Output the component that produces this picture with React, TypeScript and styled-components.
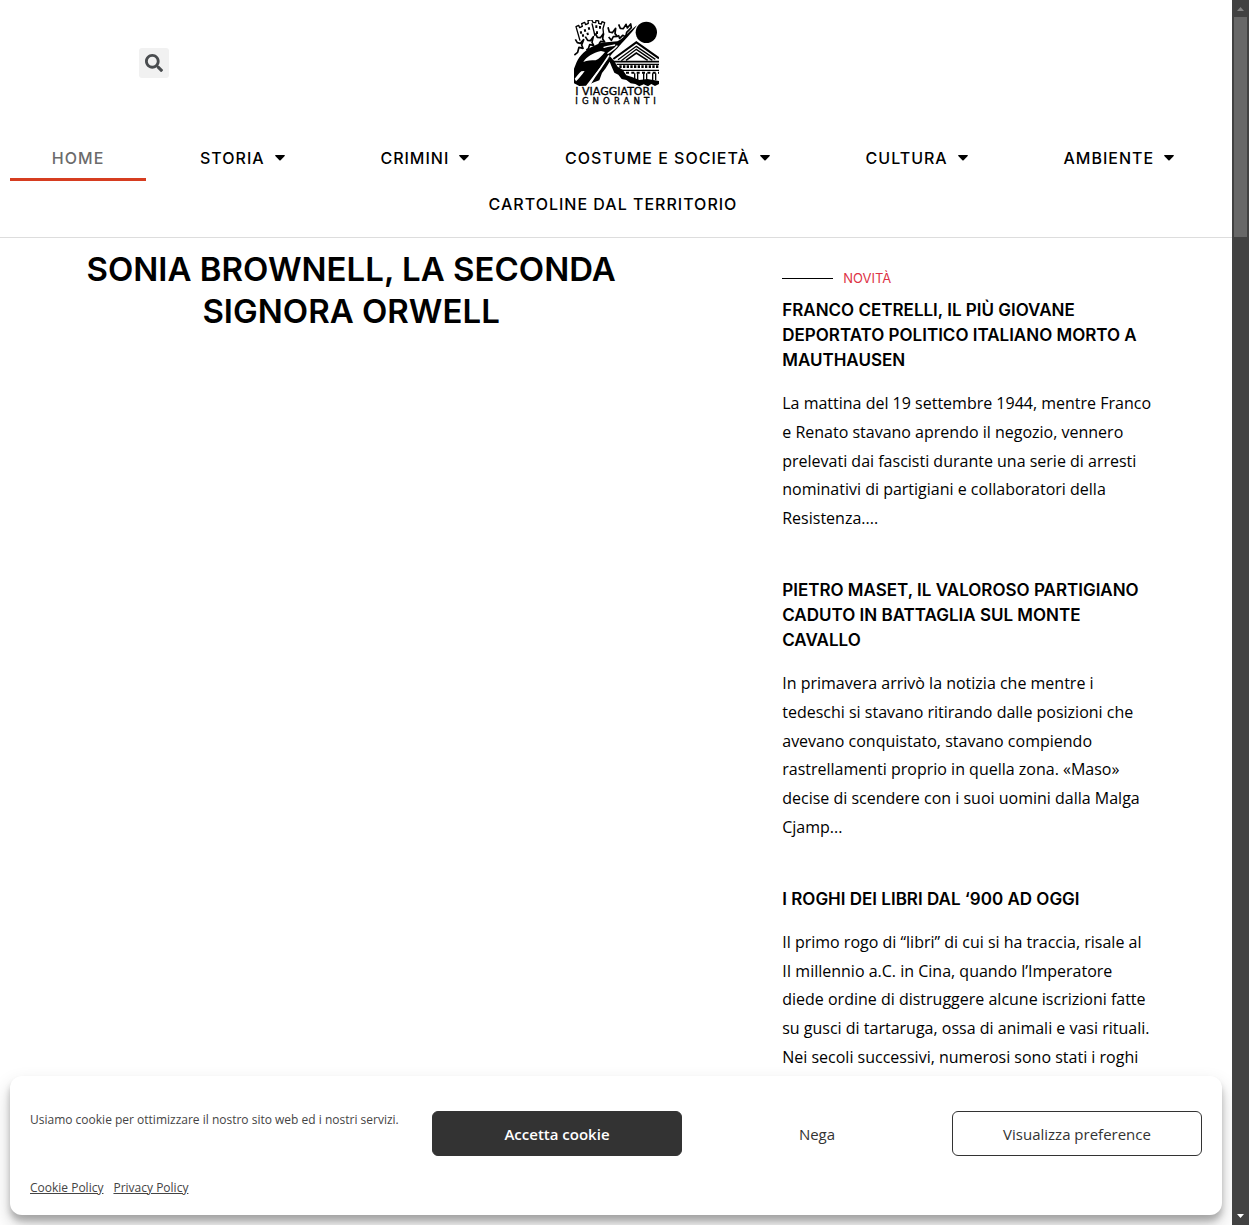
import React from "react";
import styled, { createGlobalStyle } from "styled-components";

const headingFont = `Inter, "Liberation Sans", sans-serif`;
const bodyFont = `"Open Sans", "Noto Sans", sans-serif`;

const GlobalStyle = createGlobalStyle`
  *, *::before, *::after { box-sizing: border-box; }
  body { margin: 0; background: #fff; color: #000; font-family: ${bodyFont}; }
  h1, h2, p, ul { margin: 0; padding: 0; }
`;

const Window = styled.div`
  display: grid;
  grid-template-columns: minmax(0, 1fr) 17px;
  height: 100vh;
  overflow: hidden;
`;

const Viewport = styled.div`
  position: relative;
  overflow: hidden;
`;

const Header = styled.header`
  border-bottom: 1px solid #ddd;
  padding-bottom: 10px;
`;

const Branding = styled.div`
  display: grid;
  grid-template-columns: 1fr 2fr 1fr;
  align-items: center;
  justify-items: center;
  padding: 20px 0;
`;

const SearchButton = styled.button`
  display: flex;
  align-items: center;
  justify-content: center;
  width: 30px;
  height: 30px;
  padding: 0;
  border: 0;
  border-radius: 3px;
  background: #f1f1f1;
  color: #494c4f;
  cursor: pointer;
`;

const LogoLink = styled.a`
  display: block;
  color: #000;
  svg { display: block; }
`;

const Menu = styled.ul`
  display: flex;
  flex-wrap: wrap;
  column-gap: 12px;
  padding: 10px 16px 0 10px;
  list-style: none;
`;

const MenuItem = styled.li`
  flex: 1 1 auto;
`;

const MenuLink = styled.a<{ $active?: boolean }>`
  display: flex;
  align-items: center;
  justify-content: center;
  gap: 10px;
  height: 46px;
  padding: 0 20px;
  border-bottom: 3px solid ${(p) => (p.$active ? "#d63d20" : "transparent")};
  border-top: 3px solid transparent;
  color: ${(p) => (p.$active ? "#6b6b6b" : "#000")};
  font: 500 16px/20px ${headingFont};
  letter-spacing: 1px;
  text-transform: uppercase;
  text-decoration: none;
  white-space: nowrap;
`;

const Columns = styled.main`
  display: grid;
  grid-template-columns: 57fr 43fr;
`;

const Feature = styled.article`
  padding: 10px 80px;
`;

const FeatureTitle = styled.h1`
  font: 600 33px/42px ${headingFont};
  text-align: center;
  text-transform: uppercase;
`;

const News = styled.section`
  padding: 30px 80px 0;
`;

const Eyebrow = styled.p`
  display: flex;
  align-items: center;
  gap: 10px;
  margin-bottom: 10px;
  color: #dd3345;
  font: 400 13px/20px ${headingFont};
  text-transform: uppercase;
  &::before {
    content: "";
    width: 51px;
    border-top: 1px solid #000;
  }
`;

const Story = styled.article`
  margin-bottom: 45px;
`;

const StoryTitle = styled.h2`
  margin-bottom: 16px;
  font: 600 17px/25px ${headingFont};
  text-transform: uppercase;
`;

const PlainLink = styled.a`
  color: inherit;
  text-decoration: none;
`;

const Excerpt = styled.p`
  font-size: 16px;
  font-weight: 400;
  line-height: 1.8;
`;

const Banner = styled.section`
  position: absolute;
  right: 10px;
  bottom: 10px;
  left: 10px;
  display: grid;
  grid-template-columns: minmax(0, 1fr) repeat(3, 250px);
  column-gap: 10px;
  row-gap: 22px;
  padding: 35px 20px 17px;
  border-radius: 12px;
  background: #fff;
  color: #444;
  box-shadow: rgba(0, 0, 0, 0.19) 0 10px 20px, rgba(0, 0, 0, 0.23) 0 6px 6px;
`;

const Message = styled.p`
  font: 400 12px/18px ${bodyFont};
`;

const variants = {
  accept: "background: #333; border-color: #333; color: #fff; font-weight: 600;",
  deny: "background: #fff; border-color: #fff; color: #333;",
  preferences: "background: #fff; border-color: #333; color: #333;",
};

const ConsentButton = styled.button<{ $kind: keyof typeof variants }>`
  height: 45px;
  border: 1px solid;
  border-radius: 6px;
  font: 400 15px/20px ${bodyFont};
  cursor: pointer;
  ${(p) => variants[p.$kind]}
`;

const Policies = styled.nav`
  display: flex;
  grid-column: 1 / -1;
  gap: 10px;
`;

const PolicyLink = styled.a`
  color: #444;
  font: 400 12px/20px ${bodyFont};
`;

const ScrollTrack = styled.div`
  display: flex;
  flex-direction: column;
  align-items: center;
  background: #424242;
`;

const ScrollThumb = styled.div`
  width: 13px;
  height: 220px;
  margin-bottom: auto;
  background: #686868;
`;

const ScrollArrow = styled.svg`
  display: block;
  width: 17px;
  height: 17px;
`;

const menu = [
  { label: "Home", active: true },
  { label: "Storia", sub: true },
  { label: "Crimini", sub: true },
  { label: "Costume e società", sub: true },
  { label: "Cultura", sub: true },
  { label: "Ambiente", sub: true },
  { label: "Cartoline dal territorio" },
];

const stories = [
  {
    title: "Franco Cetrelli, il più giovane deportato politico italiano morto a Mauthausen",
    text: "La mattina del 19 settembre 1944, mentre Franco e Renato stavano aprendo il negozio, vennero prelevati dai fascisti durante una serie di arresti nominativi di partigiani e collaboratori della Resistenza....",
  },
  {
    title: "Pietro Maset, il valoroso partigiano caduto in battaglia sul Monte Cavallo",
    text: "In primavera arrivò la notizia che mentre i tedeschi si stavano ritirando dalle posizioni che avevano conquistato, stavano compiendo rastrellamenti proprio in quella zona. «Maso» decise di scendere con i suoi uomini dalla Malga Cjamp...",
  },
  {
    title: "I roghi dei libri dal ‘900 ad oggi",
    text: "Il primo rogo di “libri” di cui si ha traccia, risale al II millennio a.C. in Cina, quando l’Imperatore diede ordine di distruggere alcune iscrizioni fatte su gusci di tartaruga, ossa di animali e vasi rituali. Nei secoli successivi, numerosi sono stati i roghi",
  },
];

const SearchIcon = () => (
  <svg width="18" height="18" viewBox="0 0 512 512" fill="currentColor" aria-hidden="true">
    <path d="M505 442.700 405.300 343c-4.500-4.500-10.600-7-17-7H372c27.600-35.300 44-79.700 44-128C416 93.100 322.900 0 208 0S0 93.100 0 208s93.100 208 208 208c48.300 0 92.700-16.400 128-44v16.300c0 6.400 2.500 12.500 7 17l99.700 99.700c9.400 9.400 24.600 9.400 33.900 0l28.300-28.300c9.400-9.400 9.400-24.600.1-34zM208 336c-70.700 0-128-57.200-128-128 0-70.700 57.200-128 128-128 70.700 0 128 57.200 128 128 0 70.700-57.200 128-128 128z" />
  </svg>
);

const Caret = () => (
  <svg width="10" height="6" viewBox="0 0 10 6" fill="currentColor" aria-hidden="true">
    <path d="M.7 0h8.600q.9.300.4 1L5.600 5.200q-.6.500-1.200 0L.3 1Q-.2.300.7 0z" />
  </svg>
);

const Logo = () => (
  <svg width="85" height="85" viewBox="42 30 255 255" role="img" aria-label="I Viaggiatori Ignoranti">
    <circle cx="259" cy="67" r="32" />

    {/* castle */}
    <g fill="none" stroke="#000" strokeWidth="4" strokeLinejoin="round">
      <path d="M60 92 48 50l8-4 3 7 8-4-2-8 9-4 3 7 8-4-1-8 11-3 4 8 8 1 1-7 8 2v7l8 2 2-7 8 3-5 18 2 20" />
      <path d="m96 40 9 38" />
      <path strokeWidth="6" d="m62 64 2 7m10-13 2 7m10-13 2 7m-20 14 2 7m12-12 2 7m25-29v8m11-6v8m-9 8v8" />
    </g>

    {/* crowd along the road */}
    <g fill="none" stroke="#000" strokeWidth="5" strokeLinejoin="round">
      <path d="m46 88 6 10 9 2 10-11-6 16 4 10-12-3-4 15-10 8" />
      <path d="m76 80 7 11 8 1 9-12-4 17 5 9-12-2-4 12-6 4" />
      <path d="m106 70 6 12 9 1 9-12-2 16 6 9-12-2-5 8" />
      <path d="m144 52 4 14 9 2 10-13-2 16 7 8-12 1-6 11-8-10" />
      <path d="m176 43 5 12 9 1 8-13 4 11 10-12 2 11-14 14-3 13-9-4-9 9-4-10" />
    </g>

    {/* winding road */}
    <path d="M231 46C208 62 196 82 172 94c-22 3-44 0-66 12-28 12-46 30-56 50l-8 20v44l16 8 20-1 22-28 26-34 24-26c10-14 20-20 28-31 18-21 32-32 53-62z" />
    <path fill="#fff" d="M70 156c10-16 28-27 53-33l12 3c-10 12-17 20-28 25-14 0-26 1-37 5z" />
    <path fill="#fff" d="M44 206c8-9 13-16 20-22l10-1c-9 12-16 22-26 31z" />
    <g fill="none" stroke="#fff" strokeLinecap="round">
      <path strokeWidth="4" d="M132 112c12-4 22-4 32-7" />
      <path strokeWidth="4" d="M144 130c12-9 20-13 27-22" />
    </g>

    {/* temple */}
    <path fill="#fff" d="m160 150 69-54 68 54v62l-57-2-42-14-16-22z" />
    <g fill="none" stroke="#000">
      <path strokeWidth="6" d="m160 147 69-50 68 48" />
      <path strokeWidth="4" d="m174 149 55-40 57 39M184 152l45-34 48 33" />
      <path strokeWidth="5" d="m198 151 31-22 34 22" />
      <path strokeWidth="5" d="M160 155h137" />
      <path strokeWidth="4" d="M170 163h127M186 181h111" />
      <path strokeWidth="8" strokeDasharray="7 4" d="M178 170h119" />
      <path strokeWidth="6" strokeDasharray="9 7" d="M198 188h99" />
      <path strokeWidth="4" d="M224 190v19m9-19v21m18-21v21m9-21v21m18-21v21m9-21v21" />
    </g>

    {/* mountain */}
    <path d="m150 139 12 13 11 18 15 9 11 17 17 5 22 9 24-3 35 6v9l-12 6-11-6-10 7-13-6-13 6-12-7-14-2-13-10-14-3-10-13-12-6-8-18-6-15-12 20-11 14-8 22-16 6-12 5 14-23 21-29z" />
    <path fill="none" stroke="#fff" strokeWidth="5" d="m86 228 17-27 19-27 25-38" />

    <g fontFamily="DejaVu Sans, sans-serif" stroke="#000" strokeWidth="1">
      <text x="46" y="254" fontSize="33">I VIAGGIATORI</text>
      <text x="46" y="281" fontSize="26" letterSpacing="12">IGNORANTI</text>
    </g>
  </svg>
);

export default function App() {
  return (
    <>
      <GlobalStyle />
      <Window>
        <Viewport>
          <Header>
            <Branding>
              <SearchButton type="button" aria-label="Cerca">
                <SearchIcon />
              </SearchButton>
              <LogoLink href="#home">
                <Logo />
              </LogoLink>
            </Branding>
            <nav aria-label="Menu principale">
              <Menu>
                {menu.map((item) => (
                  <MenuItem key={item.label}>
                    <MenuLink href="#menu" $active={item.active}>
                      {item.label}
                      {item.sub && <Caret />}
                    </MenuLink>
                  </MenuItem>
                ))}
              </Menu>
            </nav>
          </Header>
          <Columns>
            <Feature>
              <FeatureTitle>
                <PlainLink href="#orwell">Sonia Brownell, la seconda signora Orwell</PlainLink>
              </FeatureTitle>
            </Feature>
            <News>
              <Eyebrow>Novità</Eyebrow>
              {stories.map((story) => (
                <Story key={story.title}>
                  <StoryTitle>
                    <PlainLink href="#storia">{story.title}</PlainLink>
                  </StoryTitle>
                  <Excerpt>{story.text}</Excerpt>
                </Story>
              ))}
            </News>
          </Columns>
          <Banner aria-label="Gestisci consenso">
            <Message>Usiamo cookie per ottimizzare il nostro sito web ed i nostri servizi.</Message>
            <ConsentButton type="button" $kind="accept">Accetta cookie</ConsentButton>
            <ConsentButton type="button" $kind="deny">Nega</ConsentButton>
            <ConsentButton type="button" $kind="preferences">Visualizza preference</ConsentButton>
            <Policies aria-label="Documenti">
              <PolicyLink href="#cookie">Cookie Policy</PolicyLink>
              <PolicyLink href="#privacy">Privacy Policy</PolicyLink>
            </Policies>
          </Banner>
        </Viewport>
        <ScrollTrack aria-hidden="true">
          <ScrollArrow viewBox="0 0 17 17">
            <path fill="#868686" d="M5 11h7L8.500 7z" />
          </ScrollArrow>
          <ScrollThumb />
          <ScrollArrow viewBox="0 0 17 17">
            <path fill="#fff" d="M5 6h7l-3.500 4z" />
          </ScrollArrow>
        </ScrollTrack>
      </Window>
    </>
  );
}
